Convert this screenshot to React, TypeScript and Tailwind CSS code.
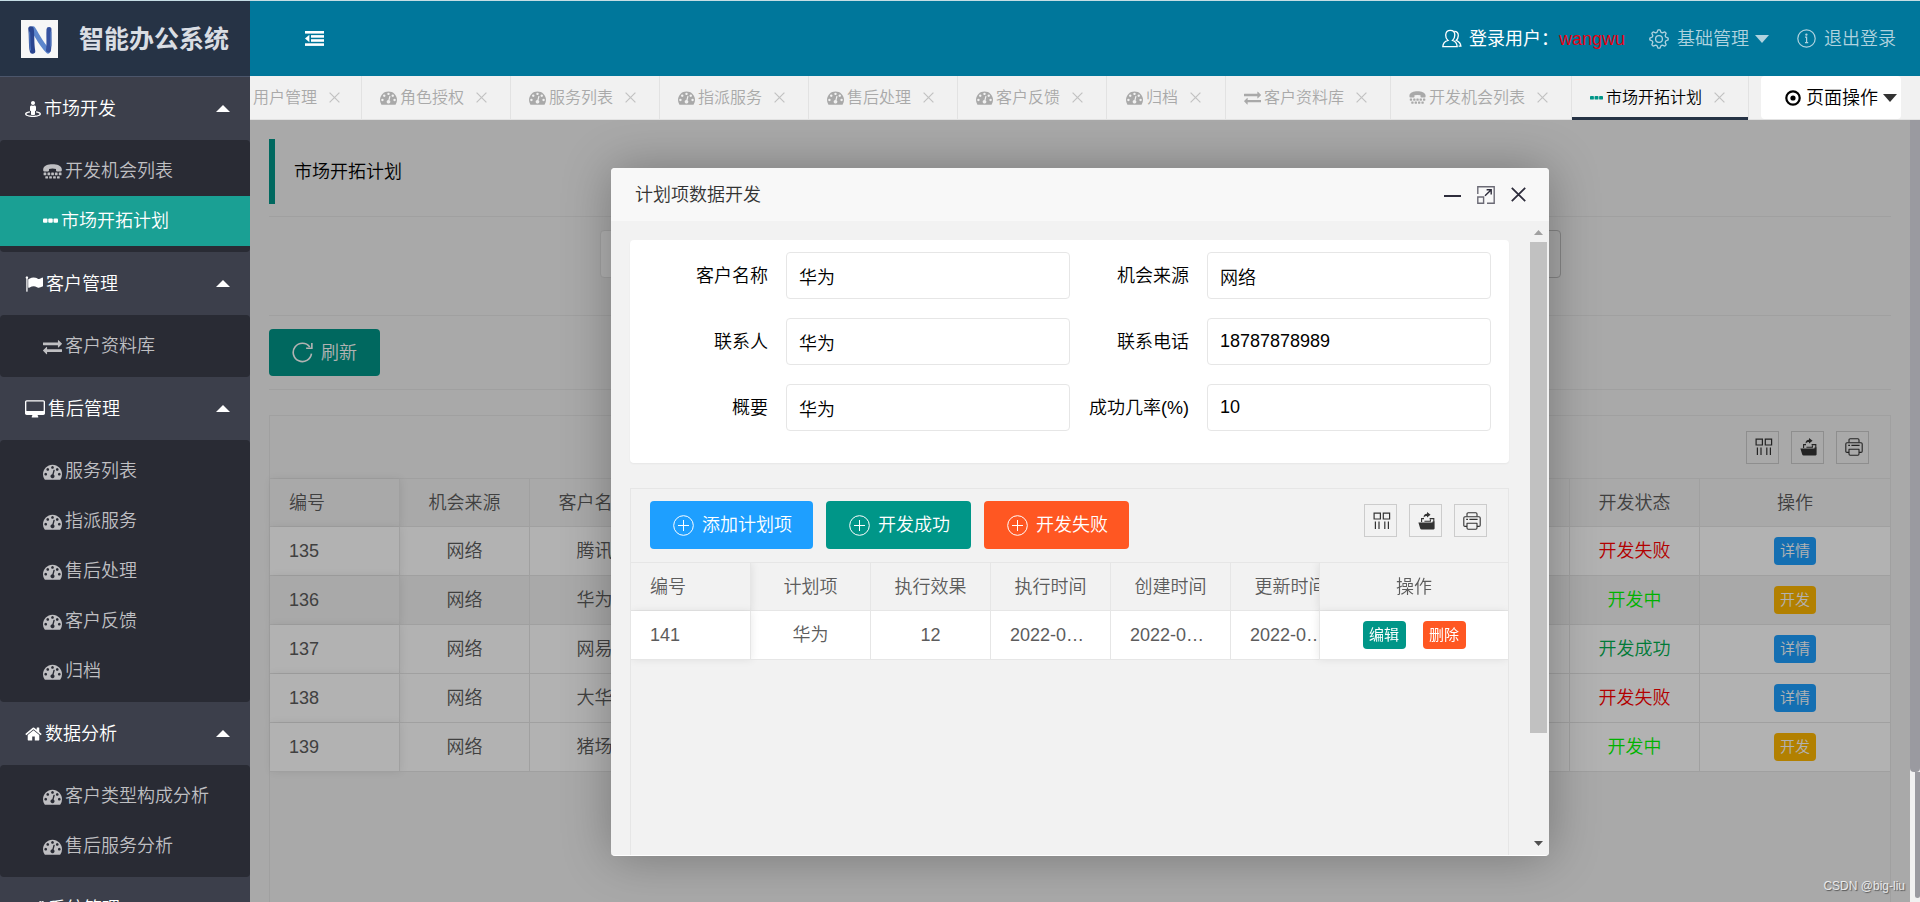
import type { ReactNode } from "react";
import { FaCogs, FaStreetView } from "react-icons/fa";

type IconProps = { className?: string };

const DashboardIcon = ({ className = "" }: IconProps) => (
  <svg viewBox="0 0 1792 1792" fill="currentColor" className={className} aria-hidden="true">
    <path d="M384 1152q0-53-37.5-90.5t-90.5-37.5-90.5 37.5-37.5 90.5 37.5 90.5 90.5 37.5 90.5-37.5 37.5-90.5zm192-448q0-53-37.5-90.5t-90.5-37.5-90.5 37.5-37.5 90.5 37.5 90.5 90.5 37.5 90.5-37.5 37.5-90.5zm428 481l101-382q6-26-7.5-48.5t-38.5-29.5-48 6.5-30 39.5l-101 382q-60 5-107 43.5t-63 98.5q-20 77 20 146t117 89 146-20 89-117q16-60-6-117t-72-91zm660-33q0-53-37.5-90.5t-90.5-37.5-90.5 37.5-37.5 90.5 37.5 90.5 90.5 37.5 90.5-37.5 37.5-90.5zm-640-640q0-53-37.5-90.5t-90.5-37.5-90.5 37.5-37.5 90.5 37.5 90.5 90.5 37.5 90.5-37.5 37.5-90.5zm448 192q0-53-37.5-90.5t-90.5-37.5-90.5 37.5-37.5 90.5 37.5 90.5 90.5 37.5 90.5-37.5 37.5-90.5zm320 448q0 261-141 483-19 29-54 29h-1402q-35 0-54-29-141-221-141-483 0-182 71-348t191-286 286-191 348-71 348 71 286 191 191 286 71 348z" />
  </svg>
);

const ExchangeIcon = ({ className = "" }: IconProps) => (
  <svg viewBox="0 0 1792 1792" fill="currentColor" className={className} aria-hidden="true">
    <path d="M1792 1184v192q0 13-9.5 22.5t-22.5 9.5h-1376v192q0 13-9.5 22.5t-22.5 9.5q-12 0-24-10l-319-320q-9-9-9-22 0-14 9-23l320-320q9-9 23-9 13 0 22.5 9.5t9.5 22.5v192h1376q13 0 22.5 9.5t9.5 22.5zm0-544q0 14-9 23l-320 320q-9 9-23 9-13 0-22.5-9.5t-9.5-22.5v-192h-1376q-13 0-22.5-9.5t-9.5-22.5v-192q0-13 9.5-22.5t22.5-9.5h1376v-192q0-14 9-23t23-9q12 0 24 10l319 319q9 9 9 23z" />
  </svg>
);

const HomeIcon = ({ className = "" }: IconProps) => (
  <svg viewBox="64 0 1664 1792" fill="currentColor" className={className} aria-hidden="true">
    <path d="M1472 992v480q0 26-19 45t-45 19h-384v-384h-256v384h-384q-26 0-45-19t-19-45v-480q0-1 .5-3t.5-3l575-474 575 474q1 2 1 6zm223-69l-62 74q-8 9-21 11h-3q-13 0-21-7l-692-577-692 577q-12 8-24 7-13-2-21-11l-62-74q-8-10-7-23.5t11-21.5l719-599q32-26 76-26t76 26l244 204v-195q0-14 9-23t23-9h192q14 0 23 9t9 23v408l219 182q10 8 11 21.5t-7 23.5z" />
  </svg>
);

const DesktopIcon = ({ className = "" }: IconProps) => (
  <svg viewBox="-64 0 1920 1680" fill="currentColor" className={className} aria-hidden="true">
    <path d="M1728 992v-832q0-13-9.5-22.5t-22.5-9.5h-1600q-13 0-22.5 9.5t-9.5 22.5v832q0 13 9.5 22.5t22.5 9.5h1600q13 0 22.5-9.5t9.5-22.5zm128-832v1088q0 66-47 113t-113 47h-544q0 37 16 77.5t32 71 16 43.5q0 26-19 45t-45 19h-512q-26 0-45-19t-19-45q0-14 16-44t32-70 16-78h-544q-66 0-113-47t-47-113v-1088q0-66 47-113t113-47h1600q66 0 113 47t47 113z" />
  </svg>
);

const FlagIcon = ({ className = "" }: IconProps) => (
  <svg viewBox="0 0 1792 1792" fill="currentColor" className={className} aria-hidden="true">
    <path d="M320 256q0 72-64 110v1266q0 13-9.5 22.5t-22.5 9.5h-64q-13 0-22.5-9.5t-9.5-22.5v-1266q-64-38-64-110 0-53 37.5-90.5t90.5-37.5 90.5 37.5 37.5 90.5zm1472 64v763q0 25-12.5 38.5t-39.5 27.5q-215 116-369 116-61 0-123.5-22t-108.5-48-115.5-48-142.5-22q-192 0-464 146-17 9-33 9-26 0-45-19t-19-45v-742q0-32 31-55 21-14 79-43 236-120 421-120 107 0 200 29t219 88q38 19 88 19 54 0 117.5-21t110-47 88-47 54.5-21q26 0 45 19t19 45z" />
  </svg>
);

const TtyIcon = ({ className = "" }: IconProps) => (
  <svg viewBox="0 0 19 15" fill="currentColor" className={className} aria-hidden="true">
    <path d="M.2 6.6 V5 C.8 1.4 5 .2 9.5 .2 S18.2 1.4 18.8 5 V6.6 Q18.8 7.4 18 7.4 H13.8 Q13 7.4 13 6.6 V5 Q9.5 4 6 5 V6.6 Q6 7.4 5.2 7.4 H1 Q.2 7.4 .2 6.6 Z" />
    {[0.6, 4.5, 8.2, 11.9, 15.8].map((x) => (
      <rect key={x} x={x} y="8.6" width="2.7" height="2.6" rx=".5" />
    ))}
    {[2.3, 6.2, 10.1, 14].map((x) => (
      <rect key={x} x={x} y="12.2" width="2.7" height="2.4" rx=".5" />
    ))}
  </svg>
);

const DotsIcon = ({ className = "" }: IconProps) => (
  <svg viewBox="0 0 15 16" fill="currentColor" className={className} aria-hidden="true">
    <rect x="0" y="5.6" width="4.5" height="4.2" rx="1" />
    <rect x="5.25" y="5.6" width="4.5" height="4.2" rx="1" />
    <rect x="10.5" y="5.6" width="4.5" height="4.2" rx="1" />
  </svg>
);

const OutdentIcon = () => (
  <svg viewBox="0 0 19 15" fill="currentColor" className="h-[15px] w-[19px]" aria-hidden="true">
    <rect x="0" y="0" width="19" height="2.6" />
    <rect x="6" y="4.1" width="13" height="2.6" />
    <rect x="6" y="8.2" width="13" height="2.6" />
    <rect x="0" y="12.3" width="19" height="2.6" />
    <path d="M0 7.5 L4.4 3.8 V11.2 Z" />
  </svg>
);

const UserIcon = () => (
  <svg viewBox="0 0 20 20" fill="none" stroke="currentColor" strokeWidth="1.3" className="size-5" aria-hidden="true">
    <path d="M.8 17.7 C1 14 3 12.3 6 11.4 C3.8 9.6 3.6 7.8 3.7 6 C3.9 3 5.8 1.3 8.3 1.3 C11 1.3 12.8 3.2 12.8 6 C12.8 8.4 12.1 10.1 10.5 11.4 C13.5 12.4 15 14.3 15.2 17.7 Z" />
    <path d="M12.2 2.3 C15 2.2 16.4 4.2 16.3 6.6 C16.2 8.8 15.6 10 14.3 11.3 C16.8 12.4 18.6 14.2 18.9 17.2 H16.6" />
  </svg>
);

const gearPoints = Array.from({ length: 32 }, (_, i) => {
  const step = i % 4;
  const radius = step < 2 ? 9.2 : 7;
  const angle = ((i * 11.25 - 5.6) * Math.PI) / 180;
  return `${(10 + radius * Math.cos(angle)).toFixed(2)},${(10 + radius * Math.sin(angle)).toFixed(2)}`;
}).join(" ");

const GearIcon = () => (
  <svg viewBox="0 0 20 20" fill="none" stroke="currentColor" strokeWidth="1.3" strokeLinejoin="round" className="size-5" aria-hidden="true">
    <polygon points={gearPoints} />
    <circle cx="10" cy="10" r="3.4" />
  </svg>
);

const InfoIcon = () => (
  <svg viewBox="0 0 19 19" fill="none" stroke="currentColor" strokeWidth="1.2" className="size-[19px]" aria-hidden="true">
    <circle cx="9.5" cy="9.5" r="8.7" />
    <path d="M8 8.2 H9.6 V13.6 M8 13.6 H11.2" />
    <circle cx="9.4" cy="5.6" r=".6" fill="currentColor" />
  </svg>
);

const TargetIcon = () => (
  <svg viewBox="0 0 16 16" fill="none" stroke="currentColor" className="size-4" aria-hidden="true">
    <circle cx="8" cy="8" r="6.7" strokeWidth="2.2" />
    <circle cx="8" cy="8" r="2.6" fill="currentColor" stroke="none" />
  </svg>
);

const CaretDown = ({ className = "" }: IconProps) => (
  <svg viewBox="0 0 14 8" fill="currentColor" className={`h-2 w-3.5 ${className}`} aria-hidden="true">
    <path d="M0 0 H14 L7 8 Z" />
  </svg>
);

const CaretUp = () => (
  <svg viewBox="0 0 14 7" fill="currentColor" className="h-[7px] w-3.5" aria-hidden="true">
    <path d="M0 7 H14 L7 0 Z" />
  </svg>
);

const PlusCircle = () => (
  <svg viewBox="0 0 21 21" fill="none" stroke="currentColor" className="size-[21px]" aria-hidden="true">
    <circle cx="10.5" cy="10.5" r="9.8" strokeWidth="1" />
    <path d="M10.5 5 V16 M5 10.5 H16" strokeWidth="1" />
  </svg>
);

const RefreshIcon = () => (
  <svg viewBox="0 0 22 22" fill="none" stroke="currentColor" strokeWidth="1.7" className="size-[21px]" aria-hidden="true">
    <path d="M20.4 12.2 A9.6 9.6 0 1 1 18.6 5.2" />
    <path d="M20.8 1 V6.6 H14.8" />
  </svg>
);

const ColumnsIcon = () => (
  <svg viewBox="0 0 18 18" fill="none" stroke="#333" strokeWidth="1.2" className="ml-[3px] size-[18px]" aria-hidden="true">
    <path d="M1.1 1.1 H7.4 V7 H1.1 Z M10.3 1.1 H16.6 V7 H10.3 Z" />
    <path d="M2.4 9.4 V17 M6 9.4 V17 M11.8 9.4 V17 M15.4 9.4 V17" />
  </svg>
);

const ExportIcon = () => (
  <svg viewBox="0 0 18 18" className="ml-[3px] size-[18px]" aria-hidden="true">
    <path d="M.4 10.6 H14.4 V9.6 H16.6 V16.6 Q16.6 17.4 15.6 17.4 H3.6 Q2.6 17.4 2.2 16.4 Z" fill="#333" />
    <path d="M3.6 10 V6.6 H6 M11.6 6.6 H15.8 V10 M6.4 9.2 H12.4 V7.6" fill="none" stroke="#333" strokeWidth="1.1" />
    <path d="M5.6 5.4 Q5.6 2 9 1.8 V0 L12.6 2.8 L9 5.6 V4 Q7 4 5.6 5.4 Z" fill="#333" />
  </svg>
);

const PrintIcon = () => (
  <svg viewBox="0 0 18 18" fill="none" stroke="#333" strokeWidth="1.1" strokeLinejoin="round" className="ml-[3px] size-[18px]" aria-hidden="true">
    <path d="M4 4.6 V2 Q4 .8 5.2 .8 H12.8 Q14 .8 14 2 V4.6" />
    <path d="M4 14.4 H2 Q.8 14.4 .8 13.2 V6 Q.8 4.8 2 4.8 H16 Q17.2 4.8 17.2 6 V13.2 Q17.2 14.4 16 14.4 H14" />
    <path d="M4 11.2 H14 V16 Q14 17.2 12.8 17.2 H5.2 Q4 17.2 4 16 Z M3.2 7.4 H5 M6.4 7.4 H14.6" />
  </svg>
);

const Logo = () => (
  <svg viewBox="0 0 37 38" className="h-[38px] w-[37px]" aria-hidden="true">
    <rect width="37" height="38" fill="#f7f7f7" />
    <g fill="none" strokeLinecap="round">
      <path d="M12 9 C16 15 20 24 27 31" stroke="#5d86cc" strokeWidth="5" />
      <path d="M10 9 C11 15 10 24 11.5 31" stroke="#2a4590" strokeWidth="5.5" />
      <path d="M28 9.5 C27.5 16 28.5 24 27.5 30" stroke="#36529f" strokeWidth="5" />
      <path d="M8.5 12 C9 18 8.5 24 9.5 30 M29.8 12 V26" stroke="#4e74bd" strokeWidth="1.2" />
    </g>
  </svg>
);

type MenuItem = { label: string; icon: ReactNode; active?: boolean };
const dash = <DashboardIcon className="size-[19px]" />;

const menu: { label: string; icon: ReactNode; items: MenuItem[] }[] = [
  {
    label: "市场开发",
    icon: <FaStreetView className="h-[18px] w-4" />,
    items: [
      { label: "开发机会列表", icon: <TtyIcon className="h-[15px] w-[19px]" /> },
      { label: "市场开拓计划", icon: <DotsIcon className="h-4 w-[15px]" />, active: true },
    ],
  },
  {
    label: "客户管理",
    icon: <FlagIcon className="size-[18px]" />,
    items: [{ label: "客户资料库", icon: <ExchangeIcon className="size-[19px]" /> }],
  },
  {
    label: "售后管理",
    icon: <DesktopIcon className="h-[18px] w-5" />,
    items: ["服务列表", "指派服务", "售后处理", "客户反馈", "归档"].map((label) => ({ label, icon: dash })),
  },
  {
    label: "数据分析",
    icon: <HomeIcon className="h-[18px] w-[17px]" />,
    items: ["客户类型构成分析", "售后服务分析"].map((label) => ({ label, icon: dash })),
  },
  { label: "系统管理", icon: <FaCogs className="h-[18px] w-5" />, items: [] },
];

const tabDash = <DashboardIcon className="size-[17px]" />;
const tabs: MenuItem[] = [
  { label: "角色授权", icon: tabDash },
  { label: "服务列表", icon: tabDash },
  { label: "指派服务", icon: tabDash },
  { label: "售后处理", icon: tabDash },
  { label: "客户反馈", icon: tabDash },
  { label: "归档", icon: tabDash },
  { label: "客户资料库", icon: <ExchangeIcon className="size-[17px]" /> },
  { label: "开发机会列表", icon: <TtyIcon className="h-[13px] w-[17px]" /> },
  { label: "市场开拓计划", icon: <DotsIcon className="h-4 w-[13px] text-[#009688]" />, active: true },
];

const rows = [
  { id: 135, name: "腾讯", status: "开发失败", color: "text-[#ff0000]" },
  { id: 136, name: "华为", status: "开发中", color: "text-[#00ff00]", shaded: true },
  { id: 137, name: "网易", status: "开发成功", color: "text-[#00b050]" },
  { id: 138, name: "大华", status: "开发失败", color: "text-[#ff0000]" },
  { id: 139, name: "猪场", status: "开发中", color: "text-[#00ff00]" },
];

const fields = [
  { id: "customer", label: "客户名称", value: "华为" },
  { id: "source", label: "机会来源", value: "网络" },
  { id: "contact", label: "联系人", value: "华为" },
  { id: "phone", label: "联系电话", value: "18787878989" },
  { id: "summary", label: "概要", value: "华为" },
  { id: "rate", label: "成功几率(%)", value: "10" },
];

const CloseMark = ({ label }: { label: string }) => (
  <button type="button" aria-label={`关闭${label}`} className="text-[#c2c2c2]">
    <svg viewBox="0 0 11 11" stroke="currentColor" strokeWidth="1.2" className="size-[11px]" aria-hidden="true">
      <path d="M.6 .6 L10.4 10.4 M10.4 .6 L.6 10.4" />
    </svg>
  </button>
);

function TableTools() {
  const box = "flex size-[33px] items-center justify-center border border-[#ccc]";
  return (
    <div className="ml-auto flex gap-3">
      <button type="button" aria-label="筛选列" className={box}><ColumnsIcon /></button>
      <button type="button" aria-label="导出" className={box}><ExportIcon /></button>
      <button type="button" aria-label="打印" className={box}><PrintIcon /></button>
    </div>
  );
}

function Sidebar() {
  return (
    <aside className="flex w-[250px] shrink-0 flex-col overflow-hidden bg-[#3c3f4b]">
      <div className="flex h-[76px] shrink-0 items-center gap-[21px] border-b border-[#4c566b] bg-[#263345] pl-[21px]">
        <Logo />
        <h1 className="text-[25px] font-bold text-[#d9dde3]">智能办公系统</h1>
      </div>
      <nav>
        {menu.map((group) => (
          <section key={group.label}>
            <button type="button" className="flex h-[63px] w-full items-center gap-[3px] pr-5 pl-[25px] text-white">
              {group.icon}
              <span className="mr-auto">{group.label}</span>
              <CaretUp />
            </button>
            {group.items.length > 0 && (
              <ul className="rounded-sm bg-[#292b34] py-1.5">
                {group.items.map((item) => (
                  <li key={item.label}>
                    <a
                      href="#"
                      className={`flex h-[50px] items-center gap-[3px] pl-[43px] ${
                        item.active ? "bg-[#1aa094] text-white" : "text-[#bfbfc2]"
                      }`}
                    >
                      {item.icon}
                      {item.label}
                    </a>
                  </li>
                ))}
              </ul>
            )}
          </section>
        ))}
      </nav>
    </aside>
  );
}

function Header() {
  return (
    <header className="flex h-[75px] shrink-0 items-center bg-[#00779b] pr-6 pl-[55px] text-white">
      <button type="button" aria-label="收起菜单"><OutdentIcon /></button>
      <div className="ml-auto flex items-center gap-[7px]">
        <UserIcon />
        <span className="font-normal">登录用户：<span className="text-[#e60012]">wangwu</span></span>
      </div>
      <button type="button" className="ml-6 flex items-center gap-2 text-[#b0d3df]">
        <GearIcon />
        基础管理
        <CaretDown className="-ml-0.5" />
      </button>
      <a href="#" className="ml-7 flex items-center gap-2 text-[#b0d3df]">
        <InfoIcon />
        退出登录
      </a>
    </header>
  );
}

function TabBar() {
  return (
    <div className="flex h-11 shrink-0 border-b border-[#e2e2e2] bg-[#f1f1f1] text-base">
      <div className="flex w-[112px] items-center gap-3 border-r border-[#e2e2e2] pl-[3px] text-[#a9a9a9]">
        <a href="#">用户管理</a>
        <CloseMark label="用户管理" />
      </div>
      {tabs.map((tab) => (
        <div
          key={tab.label}
          className={`relative flex min-w-[119px] items-center justify-center gap-3 border-r border-[#e2e2e2] px-[18px] pr-[23px] ${
            tab.active ? "text-black" : "text-[#a9a9a9]"
          }`}
        >
          <a href="#" className="flex items-center gap-[3px] whitespace-nowrap">
            {tab.icon}
            {tab.label}
          </a>
          <CloseMark label={tab.label} />
          {tab.active && <span className="absolute inset-x-0 -bottom-px h-[3px] bg-[#263345]" />}
        </div>
      ))}
      <button type="button" className="mr-[19px] ml-auto flex w-[140px] items-center justify-end gap-[5px] rounded-sm bg-white pr-1 text-lg text-black">
        <TargetIcon />
        页面操作
        <CaretDown className="text-[#333]" />
      </button>
    </div>
  );
}

function PlanPage() {
  const cell = "border-r border-b border-[#e6e6e6] p-0";
  return (
    <main className="px-[19px] pt-[19px]">
      <h2 className="flex h-[65px] items-center border-l-[6px] border-[#009688] pl-[19px] text-black">市场开拓计划</h2>
      <hr className="mt-3 border-[#e6e6e6]" />
      <div className="flex justify-center pt-[13px] pb-[37px]">
        <div className="flex w-[961px] justify-between">
          <input aria-label="客户名称" className="h-12 w-[260px] rounded-sm border border-[#e6e6e6] bg-white px-3" />
          <button type="button" aria-label="重置" className="h-12 w-[100px] rounded-sm border border-[#c0c0c0]" />
        </div>
      </div>
      <hr className="border-[#e6e6e6]" />
      <button type="button" className="my-[13px] flex h-[47px] items-center gap-2 rounded-sm bg-[#009688] px-[23px] text-white">
        <RefreshIcon />
        刷新
      </button>
      <hr className="border-[#e6e6e6]" />
      <div className="mt-[25px] h-[600px] border border-[#e6e6e6]">
        <div className="flex h-[63px] items-center border-b border-[#e6e6e6] pr-[21px]">
          <TableTools />
        </div>
        <table className="w-full table-fixed border-separate border-spacing-0 text-center text-[#5c5c5c]">
          <colgroup>
            <col className="w-[130px]" />
            <col className="w-[130px]" />
            <col className="w-[130px]" />
            <col />
            <col className="w-[130px]" />
            <col className="w-[190px]" />
          </colgroup>
          <thead>
            <tr className="h-12">
              <th className={`${cell} pl-[19px] text-left font-[350] shadow-[1px_0_8px_rgba(0,0,0,.08)]`}>编号</th>
              <th className={`${cell} font-[350]`}>机会来源</th>
              <th className={`${cell} font-[350]`}>客户名称</th>
              <td className={cell} />
              <th className={`${cell} font-[350]`}>开发状态</th>
              <th className="border-b border-[#e6e6e6] p-0 font-[350]">操作</th>
            </tr>
          </thead>
          <tbody>
            {rows.map((row) => (
              <tr key={row.id} className={`h-[49px] ${row.shaded ? "bg-[#f2f2f2]" : "bg-white"}`}>
                <td className={`${cell} pl-[19px] text-left shadow-[1px_0_8px_rgba(0,0,0,.08)]`}>{row.id}</td>
                <td className={cell}>网络</td>
                <td className={cell}>{row.name}</td>
                <td className={cell} />
                <td className={`${cell} ${row.color}`}>{row.status}</td>
                <td className="border-b border-[#e6e6e6] p-0">
                  <button
                    type="button"
                    className={`inline-flex h-7 w-[42px] items-center justify-center rounded-sm align-middle text-[15px] text-white ${
                      row.status === "开发中" ? "bg-[#ffb800]" : "bg-[#1e9fff]"
                    }`}
                  >
                    {row.status === "开发中" ? "开发" : "详情"}
                  </button>
                </td>
              </tr>
            ))}
          </tbody>
        </table>
      </div>
    </main>
  );
}

function PlanTable() {
  const cell = "border-r border-b border-[#e6e6e6] p-0";
  const actionBtn = "flex h-12 items-center gap-2 rounded-sm pr-[21px] pl-[23px] text-white";
  return (
    <div className="mt-[25px] h-[500px] border border-[#e6e6e6]">
      <div className="flex h-[74px] items-start gap-[13px] border-b border-[#e6e6e6] pt-3 pr-[21px] pl-[19px]">
        <button type="button" className={`${actionBtn} bg-[#1e9fff]`}><PlusCircle />添加计划项</button>
        <button type="button" className={`${actionBtn} bg-[#009688]`}><PlusCircle />开发成功</button>
        <button type="button" className={`${actionBtn} bg-[#ff5722]`}><PlusCircle />开发失败</button>
        <div className="ml-auto pt-[3px]"><TableTools /></div>
      </div>
      <div className="overflow-hidden pb-4">
        <table className="w-[909px] table-fixed border-separate border-spacing-0 text-center text-[#5c5c5c]">
          <colgroup>
            <col span={6} className="w-[120px]" />
            <col className="w-[189px]" />
          </colgroup>
          <thead>
            <tr className="h-12">
              <th className={`${cell} pl-[19px] text-left font-[350] shadow-[1px_0_8px_rgba(0,0,0,.08)]`}>编号</th>
              {["计划项", "执行效果", "执行时间", "创建时间", "更新时间"].map((name) => (
                <th key={name} className={`${cell} font-[350]`}>{name}</th>
              ))}
              <th className="sticky right-0 border-b border-l border-[#e6e6e6] bg-[#f2f2f2] p-0 font-[350] shadow-[-1px_0_8px_rgba(0,0,0,.08)]">操作</th>
            </tr>
          </thead>
          <tbody>
            <tr className="h-[49px] bg-white">
              <td className={`${cell} pl-[19px] text-left shadow-[1px_0_8px_rgba(0,0,0,.08)]`}>141</td>
              {["华为", "12"].map((value) => (
                <td key={value} className={cell}>{value}</td>
              ))}
              {["执行", "创建", "更新"].map((key) => (
                <td key={key} className={`${cell} pl-[19px] text-left`}>2022-0…</td>
              ))}
              <td className="sticky right-0 border-b border-l border-[#e6e6e6] bg-white p-0 shadow-[-1px_0_8px_rgba(0,0,0,.08)]">
                <div className="flex justify-center gap-[17px] text-[15px] font-normal text-white">
                  <button type="button" className="h-7 w-[43px] rounded-sm bg-[#009688]">编辑</button>
                  <button type="button" className="h-7 w-[43px] rounded-sm bg-[#ff5722]">删除</button>
                </div>
              </td>
            </tr>
          </tbody>
        </table>
      </div>
    </div>
  );
}

function Dialog() {
  return (
    <section
      role="dialog"
      aria-label="计划项数据开发"
      className="flex h-[688px] max-h-full w-[938px] max-w-full flex-col overflow-hidden rounded-sm border-b border-white bg-[#f2f2f2] shadow-[1px_1px_50px_rgba(0,0,0,.3)]"
    >
      <div className="flex h-[53px] shrink-0 items-center bg-[#f8f8f8] pr-[23px] pl-6 text-[#333]">
        <h3 className="mr-auto">计划项数据开发</h3>
        <div className="flex items-center gap-4 text-[#2e2d3c]">
          <button type="button" aria-label="最小化">
            <svg viewBox="0 0 17 18" className="h-[18px] w-[17px]" aria-hidden="true"><rect y="9" width="17" height="2" fill="currentColor" /></svg>
          </button>
          <button type="button" aria-label="最大化">
            <svg viewBox="0 0 18 18" fill="none" stroke="#6b6a75" strokeWidth="1.4" className="size-[18px]" aria-hidden="true">
              <path d="M.8 8 V.8 H17.2 V17.2 H10" />
              <path d="M.8 11 H6.6 V17.2 H.8 Z" />
              <path d="M8 9.8 L14 4 M9.6 3.8 H14.2 V8.4" stroke="#2e2d3c" />
            </svg>
          </button>
          <button type="button" aria-label="关闭">
            <svg viewBox="0 0 15 15" stroke="currentColor" strokeWidth="1.8" className="size-[15px]" aria-hidden="true">
              <path d="M.8 .8 L14.2 14.2 M14.2 .8 L.8 14.2" />
            </svg>
          </button>
        </div>
      </div>
      <div className="flex min-h-0 grow">
        <div className="min-w-0 grow overflow-hidden pt-[19px] pr-[21px] pl-[19px]">
          <form className="grid grid-cols-[138px_1fr_101px_1fr] gap-x-[18px] gap-y-[19px] rounded-sm bg-white pt-3 pr-[18px] pb-8 shadow-[0_1px_2px_rgba(0,0,0,.05)]">
            {fields.map((field) => (
              <div key={field.id} className="contents">
                <label htmlFor={field.id} className="self-center text-right whitespace-nowrap text-black">{field.label}</label>
                <input
                  id={field.id}
                  defaultValue={field.value}
                  className="h-[47px] w-full min-w-0 rounded-sm border border-[#e6e6e6] bg-white px-3 text-black"
                />
              </div>
            ))}
          </form>
          <PlanTable />
        </div>
        <div className="flex w-[19px] shrink-0 flex-col items-center bg-[#f1f1f1] pr-0.5" aria-hidden="true">
          <svg viewBox="0 0 9 5" className="mt-[9px] mb-[7px] h-[5px] w-[9px] shrink-0"><path d="M0 5 H9 L4.5 0 Z" fill="#a0a0a0" /></svg>
          <div className="h-[491px] w-full bg-[#c1c1c1]" />
          <svg viewBox="0 0 9 5" className="mt-auto mb-[9px] h-[5px] w-[9px] shrink-0"><path d="M0 0 H9 L4.5 5 Z" fill="#505050" /></svg>
        </div>
      </div>
    </section>
  );
}

export default function App() {
  return (
    <div className="relative flex h-screen flex-col overflow-hidden border-t border-[#c5dde4] bg-[#f2f2f2] font-['Liberation_Sans','Noto_Sans_CJK_SC',sans-serif] text-lg leading-6 font-[350]">
      <div className="flex min-h-0 grow">
        <Sidebar />
        <div className="flex min-w-0 grow flex-col">
          <Header />
          <TabBar />
          <div className="flex min-h-0 grow">
            <div className="relative min-w-0 grow overflow-hidden">
              <PlanPage />
              <div className="absolute inset-0 flex items-center justify-center overflow-hidden bg-black/30 pt-0.5">
                <Dialog />
              </div>
            </div>
            <div className="flex w-2.5 shrink-0 flex-col bg-[#f1f1f1] pb-1" aria-hidden="true">
              <div className="h-[652px] rounded-b-sm bg-[#9a9aa0]" />
              <div className="ml-[5px] grow rounded-b-sm bg-[#9a9aa0]" />
            </div>
          </div>
        </div>
      </div>
      <div className="absolute right-[15px] bottom-1 text-xs leading-6 text-white/80 [text-shadow:1px_1px_1px_#555]">CSDN @big-liu</div>
    </div>
  );
}
